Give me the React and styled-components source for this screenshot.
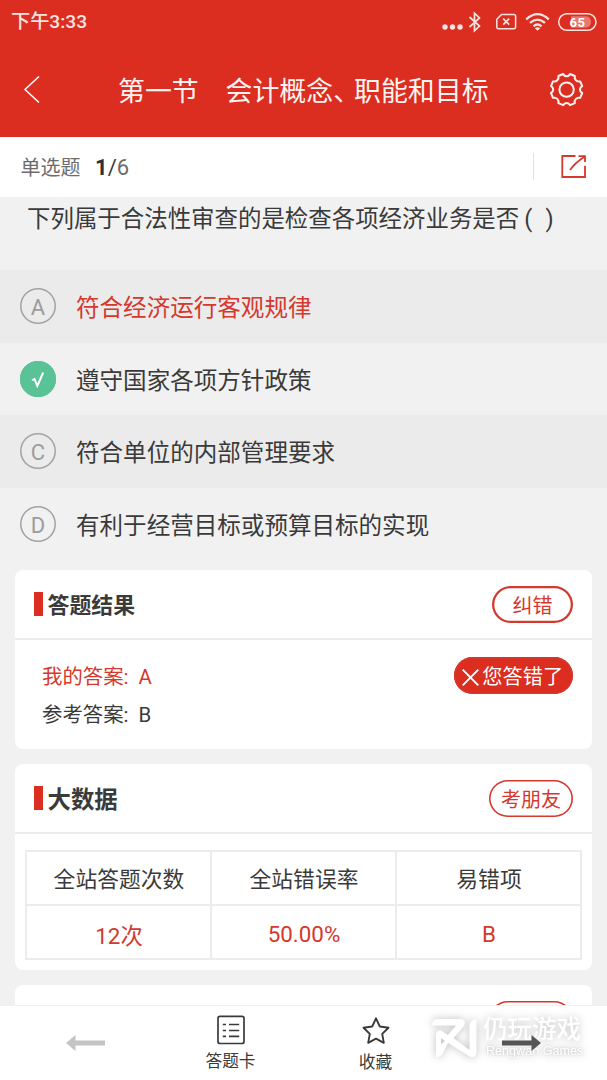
import React from 'react'
import styled, { createGlobalStyle } from 'styled-components'

const GlobalStyle = createGlobalStyle`
  * {
    box-sizing: border-box;
  }

  body {
    margin: 0;
    background: #f1f1f1;
    color: #3a3a3a;
    font-family: Roboto, "Noto Sans CJK SC", sans-serif;
  }
`

const Screen = styled.div`
  display: flex;
  flex-direction: column;
  width: 607px;
  height: 1080px;
  overflow: hidden;
`

const Header = styled.header`
  flex: none;
  height: 136.5px;
  background: #db2d20;
  color: #fff;
`

const StatusBar = styled.div`
  display: flex;
  align-items: center;
  justify-content: space-between;
  height: 43px;
  padding: 0 9px 0 11px;
`

const Time = styled.span`
  padding-top: 1px;
  font-size: 19.2px;
  line-height: 24px;
  font-weight: 500;
  color: #fbe3e1;
`

const TitleBar = styled.div`
  display: flex;
  align-items: center;
  height: 93px;
  padding: 0 22px 0 23px;
`

const Title = styled.h1`
  flex: 1;
  margin: 0 0 0 77px;
  padding-top: 4px;
  font-size: 26.9px;
  line-height: 40px;
  font-weight: 400;
  white-space: nowrap;
  color: #fff3f1;
`

const Comma = styled.span`
  margin-right: 7.5px;
  font-feature-settings: "halt";
`

const InfoBar = styled.div`
  flex: none;
  display: flex;
  align-items: center;
  height: 60px;
  padding: 0 20px 0 20.5px;
  background: #fff;
  font-size: 20px;
  color: #6c6c6c;
`

const Counter = styled.span`
  flex: 1;
  margin-left: 14.5px;
  padding-top: 1px;
  font-size: 22px;

  b {
    color: #2f2f2f;
  }

  i {
    font-style: normal;
    color: #3a3a3a;
  }
`

const Separator = styled.span`
  width: 1px;
  height: 27px;
  margin-right: 27px;
  background: #e2e2e2;
`

const Question = styled.p`
  flex: none;
  height: 73.5px;
  margin: 0;
  padding: 4px 0 0 27px;
  font-size: 23.45px;
  line-height: 36px;
  white-space: pre;
`

const Blank = styled.span`
  margin-left: 5px;
  word-spacing: 7.5px;
`

const Option = styled.div`
  flex: none;
  display: flex;
  align-items: center;
  gap: 20px;
  height: 72.6px;
  padding-left: 20px;
  background: ${props => (props.$shaded ? '#ebebeb' : '#f1f1f1')};
  color: ${props => (props.$wrong ? '#d5382c' : '#3a3a3a')};
  font-size: 23.55px;
  line-height: 36px;
`

const OptionText = styled.span`
  padding-top: 4px;
`

const Letter = styled.span`
  display: flex;
  align-items: center;
  justify-content: center;
  width: 36px;
  height: 36px;
  padding-top: ${props => (props.$right ? 0 : 3)}px;
  box-shadow: inset 0 0 0 1.5px ${props => (props.$right ? '#5ac297' : '#a3a3a3')};
  border-radius: 50%;
  background: ${props => (props.$right ? '#5ac297' : 'transparent')};
  color: #9c9c9c;
  font-size: 22px;
  line-height: 34px;
`

const Card = styled.section`
  flex: none;
  height: ${props => props.$height}px;
  margin: ${props => props.$top || 15}px 15px 0;
  border-radius: 8px;
  background: #fff;
`

const CardHead = styled.div`
  display: flex;
  align-items: center;
  height: 70px;
  padding: 0 19px;
  border-bottom: 2px solid #ececec;
`

const Mark = styled.span`
  width: 8.5px;
  height: 24px;
  margin-right: 5px;
  background: #db2d20;
`

const CardTitle = styled.h2`
  flex: 1;
  margin: 0;
  padding-top: 3.5px;
  font-size: ${props => props.$size}px;
  line-height: 34px;
  font-weight: 700;
  color: #3a3a3a;
`

const Pill = styled.span`
  display: flex;
  align-items: center;
  justify-content: center;
  gap: 3.5px;
  width: ${props => props.$width}px;
  height: 37px;
  padding: 3px ${props => (props.$filled ? 2 : 0)}px 0 0;
  box-shadow: inset 0 0 0 ${props => props.$line || 1.6}px #d5382c;
  border-radius: 19px;
  background: ${props => (props.$filled ? '#db2d20' : '#fff')};
  color: ${props => (props.$filled ? '#fff' : '#d5382c')};
  font-size: ${props => (props.$filled ? 20.2 : 20)}px;
  line-height: 30px;
  white-space: nowrap;
`

const Answers = styled.div`
  display: flex;
  justify-content: space-between;
  padding: 17px 19px 0 27px;
`

const Answer = styled.div`
  height: 38px;
  padding-top: 1px;
  color: ${props => (props.$wrong ? '#d5382c' : '#3a3a3a')};
  font-size: 20.4px;
  line-height: 38px;
  white-space: pre;
`

const Stats = styled.div`
  display: grid;
  grid-template-columns: 183px 183px 183px;
  grid-template-rows: 52px 52px;
  gap: 2px;
  width: 557px;
  margin: 16px 0 0 10px;
  padding: 2px;
  background: #ececec;
`

const Cell = styled.div`
  display: flex;
  align-items: center;
  justify-content: center;
  background: #fff;
  color: ${props => (props.$value ? '#d5382c' : '#3a3a3a')};
  font-size: ${props => (props.$value ? 22.4 : 21.8)}px;
  padding: ${props => (props.$value ? 3 : 0)}px 0 ${props => (props.$value ? 0 : 1)}px 1px;
`

const TabBar = styled.nav`
  position: fixed;
  left: 0;
  bottom: 0;
  display: grid;
  grid-template-columns: 158px 145px 145px 159px;
  width: 607px;
  height: 75px;
  border-top: 1px solid #f0f0f0;
  background: #fff;
`

const Tab = styled.div`
  display: flex;
  flex-direction: column;
  align-items: center;
  gap: ${props => props.$gap}px;
  padding-top: 9px;
  font-size: 16.7px;
  line-height: 24px;
`

const ArrowTab = styled.div`
  position: relative;
  display: flex;
  padding: 29px 0 0 ${props => props.$left}px;
`

const Watermark = styled.div`
  position: fixed;
  left: 431px;
  top: 1016px;
  display: flex;
  gap: 6px;
  color: #fff;
  filter: drop-shadow(0 0 4px rgba(0, 0, 0, 0.26));
`

const Brand = styled.div`
  display: flex;
  flex-direction: column;
  white-space: nowrap;
  font-size: 24.5px;
  line-height: 28px;
  font-weight: 500;

  small {
    padding-left: 3px;
    font-family: "Liberation Sans", sans-serif;
    font-size: 12.6px;
    line-height: 15px;
    font-weight: 400;
    text-shadow: 0 0 3px rgba(0, 0, 0, 0.22);
  }
`

const options = [
  { letter: 'A', text: '符合经济运行客观规律', wrong: true },
  { letter: 'B', text: '遵守国家各项方针政策', right: true },
  { letter: 'C', text: '符合单位的内部管理要求' },
  { letter: 'D', text: '有利于经营目标或预算目标的实现' }
]

function StatusIcons() {
  return (
    <svg width="157" height="24" viewBox="0 0 157 24" fill="none" stroke="#fbe3e1">
      <g fill="#fbe3e1" stroke="none">
        <circle cx="4" cy="17" r="2.7" />
        <circle cx="11.5" cy="17" r="2.7" />
        <circle cx="19" cy="17" r="2.7" />
      </g>
      <path d="M28.5 7L38.5 16L33.5 20.8V3.2L38.5 8L28.5 17" strokeWidth="1.7" />
      <path d="M60.5 4.5H72.8Q74.6 4.5 74.6 6.3V17Q74.6 18.7 72.8 18.7H57.6Q55.8 18.7 55.8 17V9.3Z" strokeWidth="1.5" />
      <path d="M62.2 8.6L68.2 14.6M68.2 8.6L62.2 14.6" strokeWidth="1.6" />
      <path d="M85.2 9.3Q96.5 -1 107.8 9.3M89 12.9Q96.5 6.4 104 12.9M92.5 16.3Q96.5 12.8 100.5 16.3" strokeWidth="2.3" />
      <path d="M93.8 18.3Q96.5 16.3 99.2 18.3L96.5 20.8Z" fill="#fbe3e1" stroke="none" />
      <path d="M130 6.3H144Q150 6.3 150 12T144 17.7H130Z" fill="#e8796f" stroke="none" />
      <rect x="117.7" y="3.7" width="37.3" height="16.6" rx="8.3" strokeWidth="1.5" />
      <text x="136.5" y="16.6" textAnchor="middle" fontSize="13" fontWeight="700" letterSpacing="0.6" fill="#fff" stroke="none">65</text>
    </svg>
  )
}

function BackIcon() {
  return (
    <svg width="18" height="28" viewBox="0 0 18 28" fill="none" stroke="#fff" strokeWidth="1.5">
      <path d="M16 .5L2 13.5L16 26.5" />
    </svg>
  )
}

function GearIcon() {
  return (
    <svg width="36" height="36" viewBox="0 0 36 36" fill="none" stroke="#fff3f1" strokeWidth="2" strokeLinejoin="round">
      <circle cx="17.6" cy="17.6" r="7.2" />
      <path transform="translate(-.4 -.4)" d="M14.6 2.4Q15.6 4.6 18 4.6T21.4 2.4L26.2 4.4Q25.6 7 27.3 8.7T31.6 9.8L33.6 14.6Q31.4 15.6 31.4 18T33.6 21.4L31.6 26.2Q29 25.6 27.3 27.3T26.2 31.6L21.4 33.6Q20.4 31.4 18 31.4T14.6 33.6L9.8 31.6Q10.4 29 8.7 27.3T4.4 26.2L2.4 21.4Q4.6 20.4 4.6 18T2.4 14.6L4.4 9.8Q7 10.4 8.7 8.7T9.8 4.4Z" />
    </svg>
  )
}

function ShareIcon() {
  return (
    <svg width="26" height="24" viewBox="0 0 26 24" fill="none" stroke="#d5382c" strokeWidth="1.8">
      <path d="M14.5 1H1.3V22H24V10.8M9 15Q14 8 23 2M17.5 1.2H24V7" />
    </svg>
  )
}

function ListIcon() {
  return (
    <svg width="28" height="30" viewBox="0 0 28 30" fill="none" stroke="#3a3a3a" strokeWidth="1.7">
      <rect x="1" y="1.3" width="26" height="27.2" rx="2" />
      <path d="M5.8 9.5H9M12 9.5H22.2M5.8 15.5H9M12 15.5H22.2M5.8 21.4H9M12 21.4H22.2" />
    </svg>
  )
}

function StarIcon() {
  return (
    <svg width="28" height="30" viewBox="0 0 28 30" fill="none" stroke="#3a3a3a" strokeWidth="1.9" strokeLinejoin="round">
      <path d="M14 3.3L17.8 11.5L26.5 12.7L20.2 18.9L21.8 27.8L14 23.6L6.2 27.8L7.8 18.9L1.5 12.7L10.2 11.5Z" />
    </svg>
  )
}

function Arrow({ color, flip }) {
  return (
    <svg width="39" height="16" viewBox="0 0 39 16" fill={color}>
      <path d={flip ? 'M39 8L29.5 0V5.5H0V10.5H29.5V16Z' : 'M0 8L9.5 0V5.5H39V10.5H9.5V16Z'} />
    </svg>
  )
}

function BrandMark() {
  return (
    <svg width="46" height="43" viewBox="0 0 46 43" fill="#fff">
      <path d="M1 9.5Q1 3 7 3H29Q36 3 33 10L22.5 22L38.5 34V9Q38.5 4 45.5 3.5V36Q45.5 42 39.5 41L17 27L12 37Q10 41 5 41V20Q5 14 10 14.5L17 19L25 9.5ZM10 22V28L14 25Z" fillRule="evenodd" />
    </svg>
  )
}

function App() {
  return (
    <Screen>
      <GlobalStyle />
      <Header>
        <StatusBar>
          <Time>下午3:33</Time>
          <StatusIcons />
        </StatusBar>
        <TitleBar>
          <BackIcon />
          <Title>第一节　会计概念<Comma>、</Comma>职能和目标</Title>
          <GearIcon />
        </TitleBar>
      </Header>

      <InfoBar>
        单选题
        <Counter><b>1</b><i>/</i>6</Counter>
        <Separator />
        <ShareIcon />
      </InfoBar>

      <Question>
        下列属于合法性审查的是检查各项经济业务是否<Blank>( )</Blank>
      </Question>

      {options.map((option, index) => (
        <Option key={option.letter} $shaded={index % 2 === 0} $wrong={option.wrong}>
          <Letter $right={option.right}>
            {option.right ? (
              <svg width="14" height="18" viewBox="0 0 14 18" fill="none" stroke="#fff" strokeWidth="2">
                <path d="M1 10.2L3.5 9L6.3 16L12.2 2.5" />
              </svg>
            ) : option.letter}
          </Letter>
          <OptionText>{option.text}</OptionText>
        </Option>
      ))}

      <Card $height={179} $top={10}>
        <CardHead>
          <Mark />
          <CardTitle $size={21.9}>答题结果</CardTitle>
          <Pill $width={81} $line={2.3}>纠错</Pill>
        </CardHead>
        <Answers>
          <div>
            <Answer $wrong>我的答案:  A</Answer>
            <Answer>参考答案:  B</Answer>
          </div>
          <Pill $width={119} $filled>
            <svg width="17" height="17" viewBox="0 0 17 17" stroke="#fff" strokeWidth="1.9">
              <path d="M.7 .7L16.3 16.3M16.3 .7L.7 16.3" />
            </svg>
            您答错了
          </Pill>
        </Answers>
      </Card>

      <Card $height={206}>
        <CardHead>
          <Mark />
          <CardTitle $size={23.4}>大数据</CardTitle>
          <Pill $width={84}>考朋友</Pill>
        </CardHead>
        <Stats>
          <Cell>全站答题次数</Cell>
          <Cell>全站错误率</Cell>
          <Cell>易错项</Cell>
          <Cell $value>12次</Cell>
          <Cell $value>50.00%</Cell>
          <Cell $value>B</Cell>
        </Stats>
      </Card>

      <Card $height={100}>
        <CardHead>
          <CardTitle $size={22} />
          <Pill $width={84} />
        </CardHead>
      </Card>

      <TabBar>
        <ArrowTab $left={66}><Arrow color="#c4c4c4" /></ArrowTab>
        <Tab $gap={5}><ListIcon />答题卡</Tab>
        <Tab $gap={6}><StarIcon />收藏</Tab>
        <Watermark>
          <BrandMark />
          <Brand>
            仍玩游戏
            <small>Rengwan Games</small>
          </Brand>
        </Watermark>
        <ArrowTab $left={54}><Arrow color="#555" flip /></ArrowTab>
      </TabBar>
    </Screen>
  )
}

export default App
